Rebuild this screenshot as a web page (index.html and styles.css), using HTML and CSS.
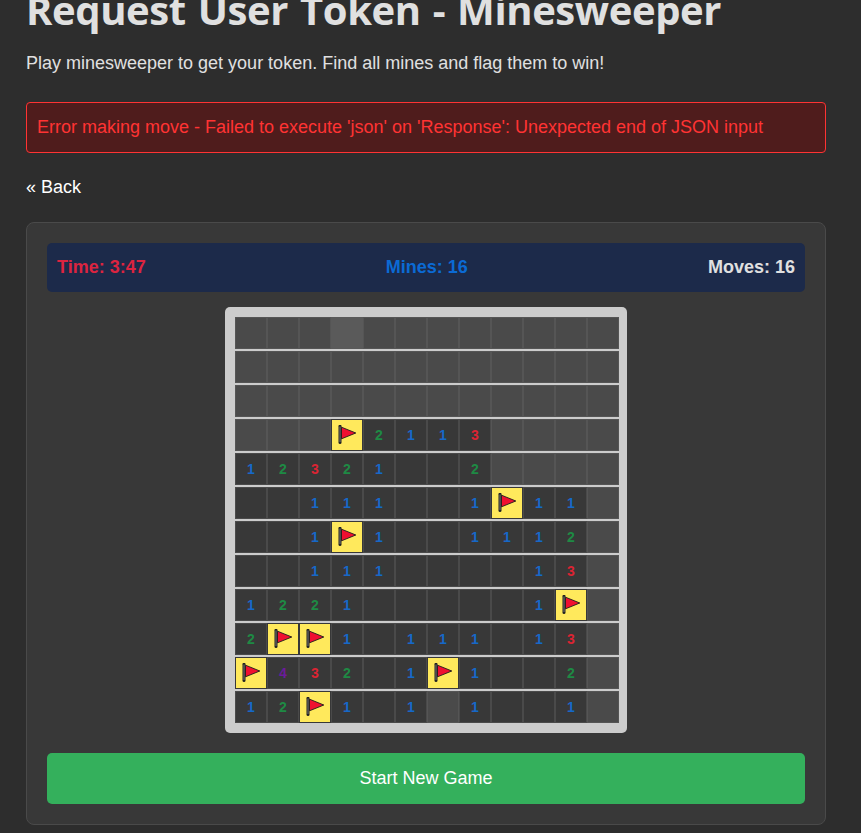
FILE: index.html
```html
<!DOCTYPE html>
<html lang="en">
<head>
<meta charset="utf-8">
<title>Request User Token - Minesweeper</title>
<link rel="stylesheet" href="styles.css">
</head>
<body>
<main class="page">
<h1 class="title">Request User Token - Minesweeper</h1>
<p class="lead">Play minesweeper to get your token. Find all mines and flag them to win!</p>
<div class="error">Error making move - Failed to execute 'json' on 'Response': Unexpected end of JSON input</div>
<a class="back" href="#">« Back</a>
<section class="card">
<div class="stats"><span class="time">Time: 3:47</span><span class="mines">Mines: 16</span><span class="moves">Moves: 16</span></div>
<div class="board-wrap"><div class="board" id="board"></div></div>
<button class="start">Start New Game</button>
</section>
</main>
<script src="game.js"></script>
</body>
</html>
```
FILE: game.js
```js
var rows = [
  "...h........",
  "............",
  "............",
  "...F2113....",
  "12321  2....",
  "  111  1F11.",
  "  1F1  1112.",
  "  111    13.",
  "1221     1F.",
  "2FF1 111 13.",
  "F432 1F1  2.",
  "12F1 1.1  1."
];
var flag = '<svg class="flag" viewBox="0 0 20 20" width="20" height="20"><path d="M3 1.2V17.6" stroke="#222" stroke-width="3" stroke-linecap="round"/><path d="M3 1.5V17" stroke="#777" stroke-width="1"/><path d="M4.5 2.2L18.8 8 4.5 13.8z" fill="#f01030" stroke="#1c1c1c" stroke-width=".9" stroke-linejoin="round"/></svg>';
var board = document.getElementById("board");
rows.forEach(function (r) {
  var row = document.createElement("div");
  row.className = "row";
  r.split("").forEach(function (c) {
    var cell = document.createElement("div");
    cell.className = "cell";
    if (c === ".") cell.classList.add("hidden");
    else if (c === "h") cell.classList.add("hidden", "hover");
    else if (c === "F") { cell.classList.add("flagged"); cell.innerHTML = flag; }
    else if (c !== " ") { cell.classList.add("n" + c); cell.textContent = c; }
    row.appendChild(cell);
  });
  board.appendChild(row);
});
```
FILE: styles.css
```css
* { box-sizing: border-box; }
html, body { margin: 0; height: 100%; overflow: hidden; }
body { background: #2d2d2d; color: #e0e0e0; font-family: "Liberation Sans", Arial, sans-serif; }
.page { width: 800px; margin: -18px 0 0 26px; }
.title { margin: 0; font: 700 40px/56px "Open Sans", sans-serif; letter-spacing: -.4px; word-spacing: 2px; color: #e0e0e0; white-space: nowrap; }
.lead { margin: 13px 0 0; font-size: 18px; line-height: 24px; }
.error { margin-top: 27px; height: 51px; padding: 0 10px; line-height: 49px; font-size: 18px; color: #ff3333; background: #4f1c1c; border: 1px solid #ff3333; border-radius: 4px; }
.back { display: block; margin-top: 24px; font-size: 18px; line-height: 21px; color: #fff; text-decoration: none; }
.card { margin-top: 24px; padding: 20px; background: #383838; border: 1px solid #4a4a4a; border-radius: 8px; }
.stats { display: flex; justify-content: space-between; align-items: center; height: 49px; padding: 0 10px; background: #1c2a4a; border-radius: 5px; font-weight: 700; font-size: 18px; }
.time { color: #dc2440; }
.mines { color: #0b6ad4; }
.moves { color: #e0e0e0; }
.board-wrap { display: flex; justify-content: center; margin-top: 15px; }
.board { width: 402px; padding: 10px 8px 10px 10px; background: #cccccc; border-radius: 5px; display: flex; flex-direction: column; gap: 2px; }
.row { display: flex; }
.cell { width: 32px; height: 32px; display: flex; align-items: center; justify-content: center; background: #383838; border: 1px solid #4a4a4a; font-weight: 700; font-size: 14px; }
.hidden { background: #4a4a4a; border-color: #555555; }
.hover { background: #5a5a5a; border-color: #5a5a5a; }
.flagged { background: #ffe95c; border-color: #383838; }
.n1 { color: #1668c8; }
.n2 { color: #1e8a44; }
.n3 { color: #dc2433; }
.n4 { color: #6a1b9a; }
.start { display: block; width: 100%; height: 51px; margin-top: 20px; border: 0; border-radius: 5px; background: #34b05c; color: #fff; font: 18px "Liberation Sans", Arial, sans-serif; }
```
